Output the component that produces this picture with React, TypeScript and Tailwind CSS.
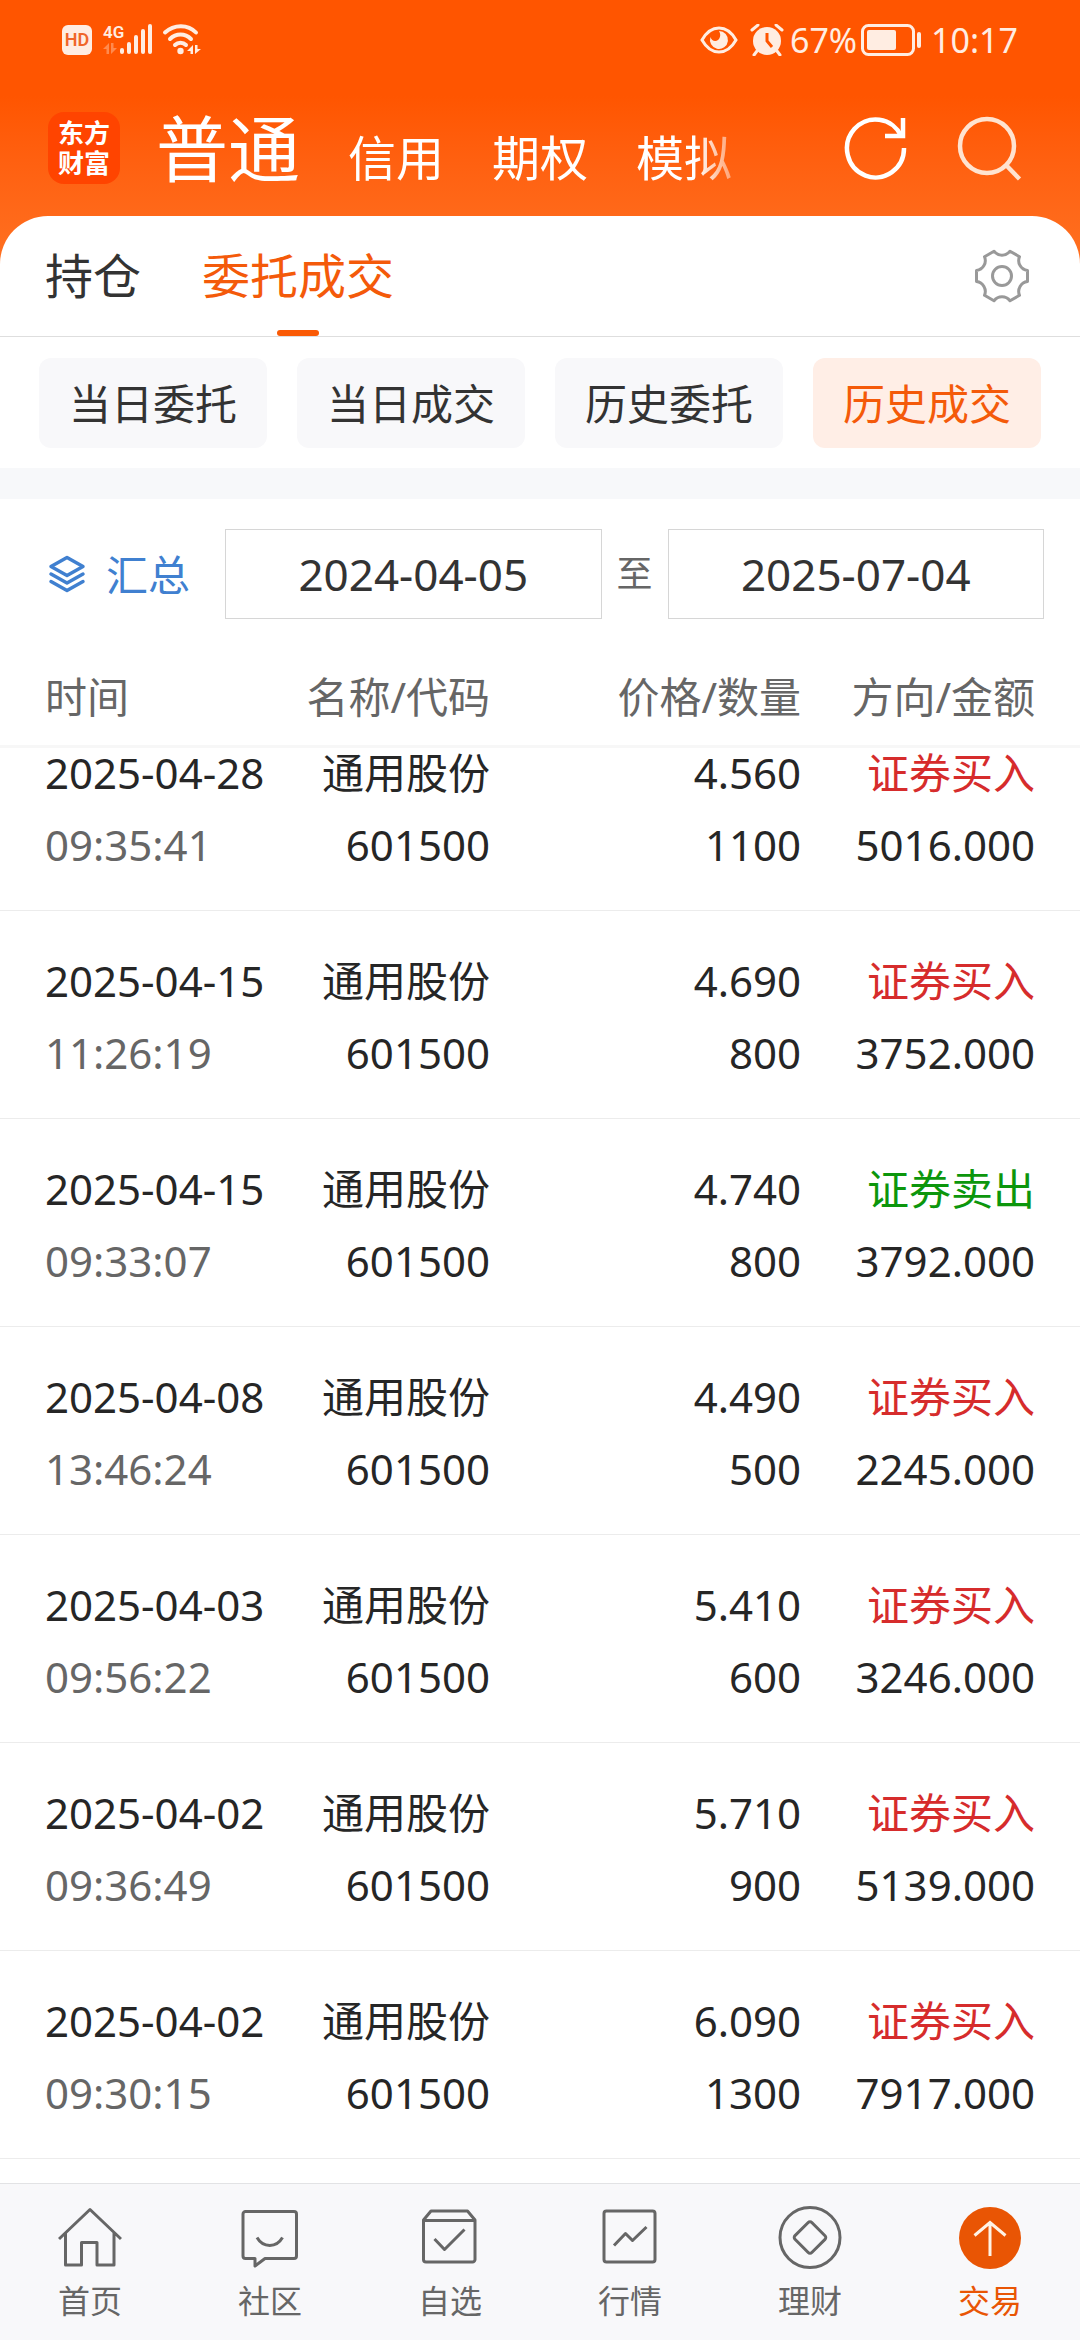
import type { ReactNode } from 'react'
import clsx from 'clsx'

type Trade = {
  date: string
  time: string
  price: string
  count: string
  side: 'buy' | 'sell'
  amount: string
}

const trades: Trade[] = [
  { date: '2025-04-28', time: '09:35:41', price: '4.560', count: '1100', side: 'buy', amount: '5016.000' },
  { date: '2025-04-15', time: '11:26:19', price: '4.690', count: '800', side: 'buy', amount: '3752.000' },
  { date: '2025-04-15', time: '09:33:07', price: '4.740', count: '800', side: 'sell', amount: '3792.000' },
  { date: '2025-04-08', time: '13:46:24', price: '4.490', count: '500', side: 'buy', amount: '2245.000' },
  { date: '2025-04-03', time: '09:56:22', price: '5.410', count: '600', side: 'buy', amount: '3246.000' },
  { date: '2025-04-02', time: '09:36:49', price: '5.710', count: '900', side: 'buy', amount: '5139.000' },
  { date: '2025-04-02', time: '09:30:15', price: '6.090', count: '1300', side: 'buy', amount: '7917.000' },
]

const filters = ['当日委托', '当日成交', '历史委托', '历史成交']

function StatusBar() {
  return (
    <div className="flex h-20 items-center justify-between px-[62px] text-[#ffede2]">
      <div className="flex items-center">
        <span className="flex size-[30px] items-center justify-center rounded-md bg-[#ffede2] font-[Roboto,sans-serif] text-lg font-semibold text-[#f0662a]">
          HD
        </span>
        {/* уровень сигнала */}
        <svg width="52" height="34" viewBox="0 0 52 34" className="ml-2.5" aria-hidden="true">
          <text x="1" y="15" fontSize="17" fontWeight="600" fontFamily="Roboto, sans-serif" fill="currentColor">
            4G
          </text>
          <path d="M1 26l6-6v11h-2.500v-5zM9 20v11l6-6h-3.500v-5z" fill="currentColor" opacity="0.35" />
          <g fill="currentColor">
            <rect x="18" y="25" width="4" height="6" rx="2" />
            <rect x="25" y="19" width="4" height="12" rx="2" />
            <rect x="32" y="12" width="4" height="19" rx="2" />
            <rect x="39" y="6" width="4" height="25" rx="2" />
            <rect x="46" y="1" width="4" height="30" rx="2" />
          </g>
        </svg>
        <svg width="40" height="34" viewBox="0 0 40 34" className="ml-2" aria-hidden="true">
          <g fill="none" stroke="currentColor" strokeWidth="4" strokeLinecap="round">
            <path d="M3 9.500C12 1 26 1 34 9.500" />
            <path d="M8 16C14 10 23 10 29 16" />
            <path d="M13 22C16 19 21 19 24 22" />
          </g>
          <circle cx="18.500" cy="28" r="3.200" fill="currentColor" />
          <path d="M25 28l6-6v9h-2.500v-3zM33 22v9l6-5h-3.500v-4z" fill="currentColor" />
        </svg>
      </div>

      <div className="flex items-center">
        <svg width="38" height="28" viewBox="0 0 38 28" aria-hidden="true">
          <path d="M2 14C11-2 27-2 36 14 27 30 11 30 2 14z" fill="none" stroke="currentColor" strokeWidth="3" />
          <path d="M19 5a9 9 0 1 1-8.500 6c1 4 5 5 7.500 3s3-6 1-9z" fill="currentColor" />
        </svg>
        <svg width="34" height="32" viewBox="0 0 34 32" className="ml-3" aria-hidden="true">
          <circle cx="17" cy="17" r="14" fill="currentColor" />
          <path d="M2 6l6-5M32 6l-6-5M7 27l-3 4M27 27l3 4" stroke="currentColor" strokeWidth="3" strokeLinecap="round" />
          <path d="M17 9v8l5 6" fill="none" stroke="#ff5500" strokeWidth="3" />
        </svg>
        <span className="ml-1.5 text-[34px] leading-10">67%</span>
        <svg width="60" height="32" viewBox="0 0 60 32" className="ml-1" aria-hidden="true">
          <rect x="1.500" y="1.500" width="51" height="29" rx="6" fill="none" stroke="currentColor" strokeWidth="3" />
          <rect x="6" y="6" width="29" height="20" rx="2" fill="currentColor" />
          <rect x="56" y="8" width="4" height="16" rx="2" fill="currentColor" />
        </svg>
        <span className="ml-2.5 text-[34px] leading-10">10:17</span>
      </div>
    </div>
  )
}

function Header() {
  return (
    <header className="flex h-[136px] items-center pr-[58px] pl-12 text-white">
      <div className="flex size-[72px] shrink-0 items-center justify-center rounded-2xl bg-[#ff4400]">
        <span className="w-[52px] text-[26px] leading-[30px] font-bold break-all">东方财富</span>
      </div>
      <nav className="ml-9 flex min-w-0 items-baseline gap-12 overflow-hidden pr-6 [mask-image:linear-gradient(to_right,#000_90%,transparent)]">
        <button type="button" className="text-[72px] leading-[108px] whitespace-nowrap">普通</button>
        <button type="button" className="text-5xl whitespace-nowrap">信用</button>
        <button type="button" className="text-5xl whitespace-nowrap">期权</button>
        <button type="button" className="text-5xl whitespace-nowrap">模拟</button>
      </nav>
      <div className="ml-auto flex shrink-0 gap-12">
        <button type="button" aria-label="刷新">
          <svg width="64" height="64" viewBox="0 0 64 64" fill="none" stroke="currentColor" strokeWidth="4.500">
            <path d="M60 32A28.500 29 0 1 1 57 19.500" />
            <path d="M59 2v18H41" />
          </svg>
        </button>
        <button type="button" aria-label="搜索" className="text-[#ffe3d0]">
          <svg width="66" height="66" viewBox="0 0 66 66" fill="none" stroke="currentColor" strokeWidth="4.500">
            <circle cx="31" cy="31" r="27" />
            <path d="M50 50l13.500 14" />
          </svg>
        </button>
      </div>
    </header>
  )
}

function Tabs() {
  return (
    <div className="flex h-[121px] items-stretch border-b border-[#dedede] pr-[50px] pl-[45px] text-5xl text-[#333]">
      <button type="button" className="mr-[61px]">持仓</button>
      <button type="button" className="relative text-[#f45a0a]">
        委托成交
        <span className="absolute bottom-0 left-1/2 h-1.5 w-[42px] -translate-x-1/2 rounded-full bg-[#fa5a05]" />
      </button>
      <button type="button" aria-label="设置" className="ml-auto text-[#999]">
        <svg width="56" height="56" viewBox="-28 -28 56 56" fill="none" stroke="currentColor" strokeWidth="3" strokeLinejoin="round">
          <path d="M25.500-5.500V5.500A10 10 0 0 0 17.500 19.300L8 24.800A10 10 0 0 0-8 24.800L-17.500 19.300A10 10 0 0 0-25.500 5.500V-5.500A10 10 0 0 0-17.500-19.300L-8-24.800A10 10 0 0 0 8-24.800L17.500-19.300A10 10 0 0 0 25.500-5.500z" />
          <circle r="9.500" />
        </svg>
      </button>
    </div>
  )
}

function DateRange() {
  const field =
    'h-[90px] min-w-0 flex-1 border border-[#d6d6d6] bg-white text-center text-[44px] text-[#333] outline-none'
  return (
    <div className="flex items-center py-[30px] pr-9 pl-12">
      <button type="button" className="mr-[35px] flex items-center gap-5 text-[42px] text-[#4080d0]">
        <svg width="38" height="38" viewBox="0 0 38 38" fill="none" stroke="currentColor" strokeWidth="3.500" strokeLinecap="round" strokeLinejoin="round">
          <path d="M19 2.500L35 11.500 19 20.500 3 11.500z" />
          <path d="M3 19l16 9 16-9M3 26.500l16 9 16-9" />
        </svg>
        汇总
      </button>
      <input type="text" aria-label="开始日期" defaultValue="2024-04-05" className={field} />
      <span className="mx-[15px] text-4xl text-[#666]">至</span>
      <input type="text" aria-label="结束日期" defaultValue="2025-07-04" className={field} />
    </div>
  )
}

function TradeRow({ trade, first }: { trade: Trade; first: boolean }) {
  const cell = clsx('pb-10 leading-[50px]', first ? 'pt-0' : 'pt-[45px]')
  return (
    <tr className="border-b border-[#ececec]">
      <td className={clsx(cell, 'pl-[45px]')}>
        <div>{trade.date}</div>
        <div className="mt-[22px] text-[#666]">{trade.time}</div>
      </td>
      <td className={clsx(cell, 'text-right')}>
        <div>通用股份</div>
        <div className="mt-[22px]">601500</div>
      </td>
      <td className={clsx(cell, 'text-right')}>
        <div>{trade.price}</div>
        <div className="mt-[22px]">{trade.count}</div>
      </td>
      <td className={clsx(cell, 'pr-[45px] text-right')}>
        <div className={trade.side === 'buy' ? 'text-[#d62c2c]' : 'text-[#0c960c]'}>
          {trade.side === 'buy' ? '证券买入' : '证券卖出'}
        </div>
        <div className="mt-[22px]">{trade.amount}</div>
      </td>
    </tr>
  )
}

function TradeTable() {
  return (
    <table className="w-full table-fixed border-collapse text-[42px] text-[#262626]">
      <thead>
        <tr className="h-[97px] border-b-3 border-[#f7f7f7] text-[#666]">
          <th className="pl-[45px] text-left font-normal">时间</th>
          <th className="w-[210px] text-right font-normal">名称/代码</th>
          <th className="w-[311px] text-right font-normal">价格/数量</th>
          <th className="w-[279px] pr-[45px] text-right font-normal">方向/金额</th>
        </tr>
      </thead>
      <tbody>
        {trades.map((trade, i) => (
          <TradeRow key={i} trade={trade} first={i === 0} />
        ))}
      </tbody>
    </table>
  )
}

function NavItem({ label, active, children }: { label: string; active?: boolean; children: ReactNode }) {
  return (
    <a
      href="#"
      className={clsx('flex flex-1 flex-col items-center gap-[11px]', active ? 'text-[#e95504]' : 'text-[#666]')}
    >
      <svg width="64" height="64" viewBox="0 0 64 64" fill="none" stroke="currentColor" strokeWidth="3" strokeLinejoin="round" aria-hidden="true">
        {children}
      </svg>
      <span className="text-[32px] leading-10">{label}</span>
    </a>
  )
}

function BottomNav() {
  return (
    <nav className="sticky bottom-0 mt-auto flex border-t border-[#e2e3e5] bg-[#f8f8fa] pt-[22px] pb-[19px]">
      <NavItem label="首页">
        <path d="M1 33L32 3.500 63 33M7.500 27v32h16V36.500h15.500V59h17V27" />
      </NavItem>
      <NavItem label="社区">
        <path d="M7.500 5.500h48.500a2.500 2.500 0 0 1 2.500 2.500v42a2.500 2.500 0 0 1-2.500 2.500H27L17 60V52.500H7.500A2.500 2.500 0 0 1 5 50V8a2.500 2.500 0 0 1 2.500-2.500z" />
        <path d="M19 31.500C25 42 38.500 42 44.500 31.500" />
      </NavItem>
      <NavItem label="自选">
        <path d="M5.500 14V53.500a2.500 2.500 0 0 0 2.500 2.500h46.500a2.500 2.500 0 0 0 2.500-2.500V14l-7.500-9H13zM5.500 14.500H57" />
        <path d="M16.500 33L26.500 43.500 46.500 23.500" />
      </NavItem>
      <NavItem label="行情">
        <rect x="6" y="5" width="51" height="51" rx="2.500" />
        <path d="M16 39.500L27.500 27.500 34.500 34.500 48.500 21" />
      </NavItem>
      <NavItem label="理财">
        <circle cx="32" cy="31.500" r="30" />
        <path d="M30.200 16.500a2.500 2.500 0 0 1 3.600 0L47 29.700a2.500 2.500 0 0 1 0 3.600L33.800 46.500a2.500 2.500 0 0 1-3.600 0L17 33.300a2.500 2.500 0 0 1 0-3.600z" />
      </NavItem>
      <NavItem label="交易" active>
        <circle cx="32" cy="32" r="31" fill="currentColor" stroke="none" />
        <path d="M32 50V16.500M16.500 29.500L32 16.500 47.500 29.500" stroke="#fff3e6" strokeLinejoin="miter" />
      </NavItem>
    </nav>
  )
}

export default function App() {
  return (
    <div className="flex min-h-screen flex-col bg-linear-to-b from-[#ff5500] from-[96px] to-[#ff7020] to-[264px] font-['Noto_Sans','Noto_Sans_CJK_SC',sans-serif]">
      <StatusBar />
      <Header />
      <main className="flex flex-1 flex-col rounded-t-[48px] bg-white">
        <Tabs />
        <div className="flex gap-[30px] px-[39px] pt-[21px] pb-5">
          {filters.map((name) => (
            <button
              key={name}
              type="button"
              className={clsx(
                'h-[90px] flex-1 rounded-xl text-[42px]',
                name === '历史成交' ? 'bg-[#ffeee6] text-[#f45a0a]' : 'bg-[#f8f8fa] text-[#333]',
              )}
            >
              {name}
            </button>
          ))}
        </div>
        <div className="h-[31px] bg-[#f7f8fa]" />
        <DateRange />
        <TradeTable />
        <BottomNav />
      </main>
    </div>
  )
}
